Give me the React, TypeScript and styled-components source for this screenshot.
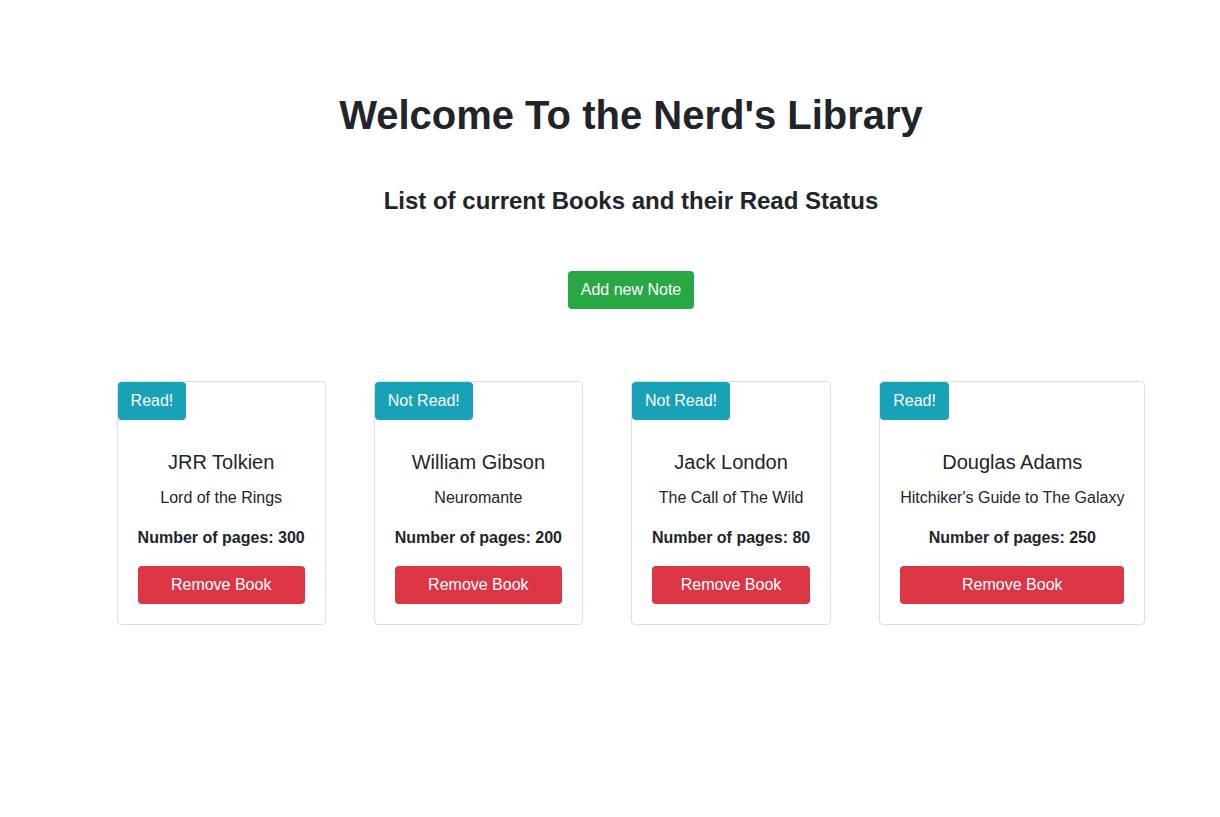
import React from 'react';
import styled, { createGlobalStyle } from 'styled-components';

interface Book {
  author: string;
  title: string;
  pages: number;
  read: boolean;
}

const books: Book[] = [
  { author: 'JRR Tolkien', title: 'Lord of the Rings', pages: 300, read: true },
  { author: 'William Gibson', title: 'Neuromante', pages: 200, read: false },
  { author: 'Jack London', title: 'The Call of The Wild', pages: 80, read: false },
  { author: 'Douglas Adams', title: "Hitchiker's Guide to The Galaxy", pages: 250, read: true },
];

const GlobalStyle = createGlobalStyle`
  * { box-sizing: border-box; }
  body {
    margin: 0;
    background: #fff;
    color: #212529;
    font-family: "Liberation Sans", Arial, sans-serif;
    font-size: 16px;
    line-height: 1.5;
  }
`;

const Page = styled.div`
  display: flex;
  flex-direction: column;
  align-items: center;
  padding: 91px 0 0 42px;
`;

const Title = styled.h1`
  margin: 0;
  font-size: 40px;
  font-weight: 700;
  line-height: 48px;
`;

const Subtitle = styled.h3`
  margin: 48px 0 0;
  font-size: 24px;
  font-weight: 700;
  line-height: 28px;
`;

const Button = styled.button<{ $variant: 'success' | 'danger' | 'info' }>`
  display: inline-block;
  border: 1px solid transparent;
  border-radius: 4px;
  padding: 6px 12px;
  font-family: inherit;
  font-size: 16px;
  line-height: 24px;
  color: #fff;
  cursor: pointer;
  background: ${({ $variant }) =>
    $variant === 'success' ? '#28a745' : $variant === 'danger' ? '#dc3545' : '#17a2b8'};
`;

const AddButton = styled(Button)`
  margin-top: 56px;
`;

const CardRow = styled.div`
  display: flex;
  align-items: flex-start;
  gap: 48px;
  margin-top: 72px;
`;

const Card = styled.div`
  display: flex;
  flex-direction: column;
  align-items: flex-start;
  border: 1px solid rgba(0, 0, 0, 0.125);
  border-radius: 4px;
`;

const StatusBadge = styled(Button)`
  border: none;
  height: 38px;
  padding: 7px 13px;
`;

const CardBody = styled.div`
  align-self: stretch;
  display: flex;
  flex-direction: column;
  align-items: stretch;
  text-align: center;
  padding: 30px 20px 20px;
`;

const Author = styled.h5`
  margin: 0 0 12px;
  font-size: 20px;
  font-weight: 400;
  line-height: 24px;
`;

const BookTitle = styled.p`
  margin: 0 0 16px;
  white-space: nowrap;
`;

const Pages = styled.p`
  margin: 0 0 16px;
  font-weight: 700;
  white-space: nowrap;
`;

export default function App() {
  return (
    <>
      <GlobalStyle />
      <Page>
        <Title>Welcome To the Nerd's Library</Title>
        <Subtitle>List of current Books and their Read Status</Subtitle>
        <AddButton $variant="success">Add new Note</AddButton>
        <CardRow>
          {books.map((b) => (
            <Card key={b.author}>
              <StatusBadge $variant="info">{b.read ? 'Read!' : 'Not Read!'}</StatusBadge>
              <CardBody>
                <Author>{b.author}</Author>
                <BookTitle>{b.title}</BookTitle>
                <Pages>Number of pages: {b.pages}</Pages>
                <Button $variant="danger">Remove Book</Button>
              </CardBody>
            </Card>
          ))}
        </CardRow>
      </Page>
    </>
  );
}
